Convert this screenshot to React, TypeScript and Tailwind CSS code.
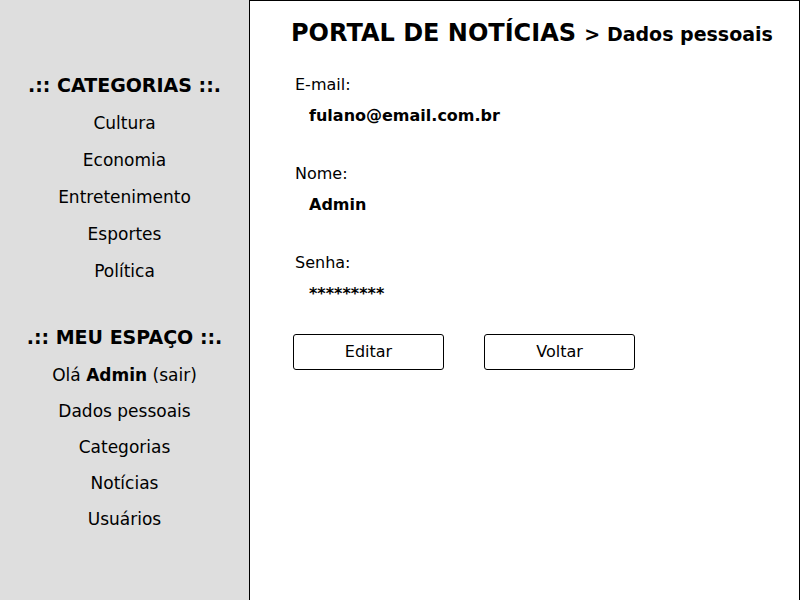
import React from "react";

const categories = ["Cultura", "Economia", "Entretenimento", "Esportes", "Política"];
const adminLinks = ["Dados pessoais", "Categorias", "Notícias", "Usuários"];

function MenuLink({ label }: { label: string }) {
  return (
    <li>
      <a href="#" className="hover:underline">{label}</a>
    </li>
  );
}

function Field({ label, value }: { label: string; value: string }) {
  return (
    <div className="flex flex-col gap-[7px]">
      <dt className="text-base leading-6">{label}</dt>
      <dd className="pl-3.5 text-base leading-6 font-bold">{value}</dd>
    </div>
  );
}

export default function App() {
  return (
    <div className="flex min-h-screen bg-white font-['DejaVu_Sans',sans-serif] text-black">
      <aside className="w-[249px] shrink-0 bg-[#dedede] pt-[73px] text-center text-[17px] leading-6">
        <nav aria-labelledby="categories">
          <h2 id="categories" className="text-[19px] leading-6 font-bold">.:: CATEGORIAS ::.</h2>
          <ul className="mt-3.5 flex flex-col gap-[13px]">
            {categories.map((label) => <MenuLink key={label} label={label} />)}
          </ul>
        </nav>
        <nav aria-labelledby="space" className="mt-[42px]">
          <h2 id="space" className="text-[19px] leading-6 font-bold">.:: MEU ESPAÇO ::.</h2>
          <ul className="mt-3.5 flex flex-col gap-3">
            <li>
              Olá <strong>Admin</strong> (<a href="#" className="hover:underline">sair</a>)
            </li>
            {adminLinks.map((label) => <MenuLink key={label} label={label} />)}
          </ul>
        </nav>
      </aside>
      <main className="flex-1 border-x border-t border-black pt-4 pl-[41px]">
        <h1 className="text-2xl leading-8 font-bold whitespace-nowrap">
          PORTAL DE NOTÍCIAS <span className="text-[19px]">&gt; Dados pessoais</span>
        </h1>
        <dl className="mt-[23px] ml-1 flex flex-col gap-[34px]">
          <Field label="E-mail:" value="fulano@email.com.br" />
          <Field label="Nome:" value="Admin" />
          <Field label="Senha:" value="*********" />
        </dl>
        <div className="mt-7 ml-0.5 flex gap-10">
          <button type="button" className="h-9 w-[151px] rounded-[3px] border border-black bg-white text-base">Editar</button>
          <button type="button" className="h-9 w-[151px] rounded-[3px] border border-black bg-white text-base">Voltar</button>
        </div>
      </main>
    </div>
  );
}
